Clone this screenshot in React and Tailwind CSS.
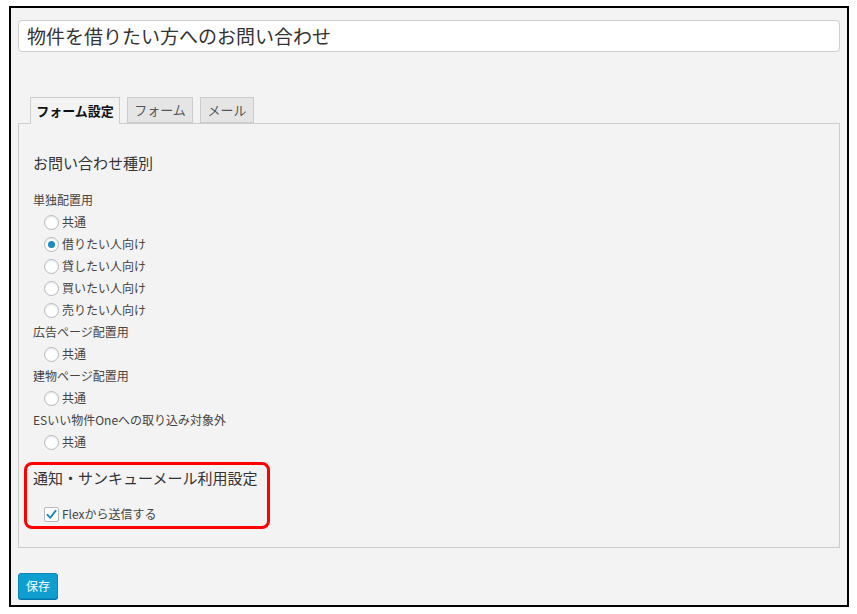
import React from 'react'

const font = { fontFamily: '"Noto Sans CJK JP", "Noto Sans", sans-serif' }

function Radio({ checked }) {
  return (
    <span className="w-[15px] h-[15px] rounded-full border border-[#b4b9be] bg-white flex items-center justify-center shrink-0 shadow-[inset_0_1px_2px_rgba(0,0,0,0.1)]">
      {checked && <span className="w-[7px] h-[7px] rounded-full bg-[#1e8cbe]" />}
    </span>
  )
}

function Option({ label, checked }) {
  return (
    <div className="h-[22px] flex items-center pl-[11px] gap-[3px] text-[12px] text-[#444]">
      <Radio checked={checked} />
      <span>{label}</span>
    </div>
  )
}

function Group({ label }) {
  return <div className="h-[22px] flex items-center text-[12px] text-[#444]">{label}</div>
}

export default function App() {
  return (
    <div className="w-[857px] h-[614px] bg-white pt-[6px] pl-[9px]" style={font}>
      <div className="w-[840px] h-[601px] border-2 border-black bg-[#f3f3f3] pt-[12px] px-[7px] flex flex-col">
        <div className="h-[32px] border border-[#cfcfcf] rounded-[4px] bg-white flex items-center pl-[8px] text-[19px] text-[#333]">
          物件を借りたい方へのお問い合わせ
        </div>

        <div className="mt-[45px] flex gap-[7px] pl-[12px] h-[26px] relative z-10">
          <div className="w-[90px] h-[27px] border border-[#ccc] border-b-0 bg-[#f3f3f3] flex items-center justify-center text-[13px] font-bold text-[#111]">
            フォーム設定
          </div>
          <div className="w-[66px] h-[26px] border border-[#ccc] bg-[#e5e5e5] flex items-center justify-center text-[13px] text-[#555]">
            フォーム
          </div>
          <div className="w-[54px] h-[26px] border border-[#ccc] bg-[#e5e5e5] flex items-center justify-center text-[13px] text-[#555]">
            メール
          </div>
        </div>

        <div className="h-[425px] border border-[#ccc] bg-[#f3f3f3] pt-[28px] px-[14px]">
          <div className="h-[22px] flex items-center text-[15px] text-[#333] whitespace-nowrap">お問い合わせ種別</div>
          <div className="mt-[15px]">
            <Group label="単独配置用" />
            <Option label="共通" />
            <Option label="借りたい人向け" checked />
            <Option label="貸したい人向け" />
            <Option label="買いたい人向け" />
            <Option label="売りたい人向け" />
            <Group label="広告ページ配置用" />
            <Option label="共通" />
            <Group label="建物ページ配置用" />
            <Option label="共通" />
            <Group label="ESいい物件Oneへの取り込み対象外" />
            <Option label="共通" />
          </div>

          <div className="mt-[9px] -ml-[9px] w-[246px] h-[67px] border-[3px] border-[#f00] rounded-[8px] pt-[2px] pl-[6px]">
            <div className="h-[22px] flex items-center text-[15px] text-[#333] whitespace-nowrap">通知・サンキューメール利用設定</div>
            <div className="mt-[14px] h-[22px] flex items-center pl-[11px] gap-[3px] text-[12px] text-[#444] whitespace-nowrap">
              <span className="w-[15px] h-[15px] rounded-[2px] border border-[#b4b9be] bg-white flex items-center justify-center shrink-0">
                <svg width="13" height="13" viewBox="0 0 16 16">
                  <path d="M3 8.5 L6.5 12 L13 3.5" fill="none" stroke="#1e8cbe" strokeWidth="2.4" strokeLinecap="round" strokeLinejoin="round" />
                </svg>
              </span>
              <span>Flexから送信する</span>
            </div>
          </div>
        </div>

        <div className="mt-[25px]">
          <button className="w-[40px] h-[26px] rounded-[3px] bg-[#0e9fd0] border border-[#0a87b4] shadow-[0_1px_0_#0073aa] text-white text-[12px] flex items-center justify-center">
            保存
          </button>
        </div>
      </div>
    </div>
  )
}
